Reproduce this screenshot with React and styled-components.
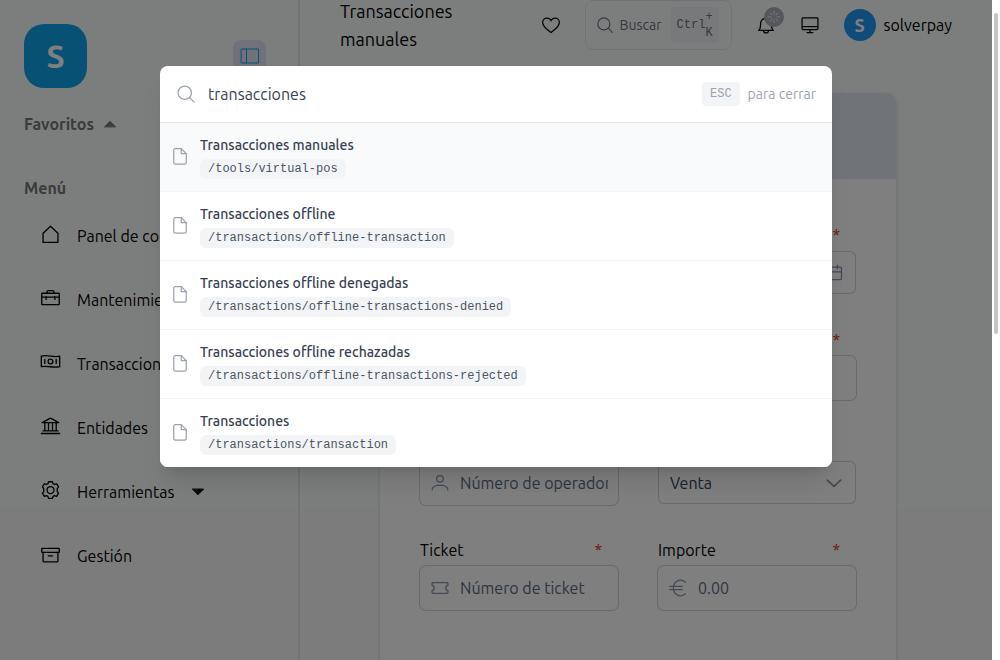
import React from "react";
import styled, { createGlobalStyle } from "styled-components";

const sans = `Ubuntu, "Noto Sans", "Open Sans", sans-serif`;
const mono = `"Liberation Mono", monospace`;

const GlobalStyle = createGlobalStyle`
  *, *::before, *::after { box-sizing: border-box; }
  body { margin: 0; font-family: ${sans}; font-size: 16px; line-height: 24px; color: #000; background: #fff; }
  button, input, select { font: inherit; color: inherit; margin: 0; }
  a { color: inherit; text-decoration: none; }
`;

const Window = styled.div`
  display: flex;
  height: 100vh;
  overflow: hidden;
`;

const Viewport = styled.div`
  position: relative;
  flex: 1;
  min-width: 0;
  display: flex;
  overflow: hidden;
  background: linear-gradient(#f9fdfb 508px, #f8f8f8 508px);
`;

const ScrollTrack = styled.div`
  flex: none;
  width: 8px;
  padding: 13px 2px 0;
  background: #fff;
`;

const ScrollThumb = styled.div`
  height: 321px;
  border-radius: 2px;
  background: #c4c4c4;
`;

const Sidebar = styled.aside`
  flex: none;
  width: 300px;
  padding: 24px;
  border-right: 2px solid #e4e6e5;
`;

const SidebarTop = styled.div`
  display: flex;
  align-items: center;
  justify-content: space-between;
  padding-right: 8px;
`;

const Logo = styled.div`
  display: grid;
  place-items: center;
  width: 63px;
  height: 64px;
  border-radius: 20px;
  background: #0ea5e9;
  color: #fff;
  font-size: 32px;
  font-weight: 700;
`;

const ToggleButton = styled.button`
  display: grid;
  place-items: center;
  width: 33px;
  height: 33px;
  padding: 0;
  border: 0;
  border-radius: 8px;
  background: #e0e4f2;
  color: #0ea5e9;
`;

const SectionTitle = styled.h2`
  display: flex;
  align-items: center;
  gap: 8px;
  margin: ${(p) => p.$top}px 0 0;
  font-size: 16px;
  font-weight: 700;
  line-height: 24px;
  color: #777;
`;

const NavList = styled.nav`
  display: flex;
  flex-direction: column;
  padding: 4px 0 0 16px;
`;

const NavItem = styled.a`
  display: flex;
  align-items: center;
  gap: 16px;
  height: 64px;
`;

const NavIcon = styled.span`
  padding-bottom: 4px;
`;

const NavLabel = styled.span`
  white-space: nowrap;
`;

const Main = styled.main`
  flex: 1;
  min-width: 0;
`;

const Header = styled.header`
  display: flex;
  align-items: center;
  height: 50px;
  padding: 0 40px;
`;

const PageTitle = styled.h1`
  flex: 1;
  margin: 0;
  padding-right: 60px;
  font-size: 18px;
  font-weight: 400;
  line-height: 28px;
`;

const IconButton = styled.button`
  position: relative;
  display: grid;
  place-items: center;
  width: 20px;
  height: 20px;
  padding: 0;
  border: 0;
  background: none;
`;

const SearchButton = styled.button`
  display: flex;
  align-items: center;
  gap: 6px;
  width: 147px;
  height: 50px;
  margin: 0 24px;
  padding: 0 12px 0 10px;
  border: 1px solid #e5e7eb;
  border-radius: 8px;
  background: none;
  color: #6b7280;
  font-size: 14px;
`;

const Shortcut = styled.kbd`
  display: flex;
  align-items: center;
  width: 48px;
  height: 36px;
  margin-left: auto;
  padding: 0 6px;
  border-radius: 4px;
  background: #f0f2f6;
  font: 12px/16px ${mono};
`;

const ShortcutKey = styled.span`
  width: 7px;
`;

const Badge = styled.span`
  position: absolute;
  top: -8px;
  right: -8px;
  display: grid;
  place-items: center;
  width: 20px;
  height: 20px;
  border-radius: 50%;
  background: #a9aebb;
  color: #fff;
`;

const Actions = styled.div`
  display: flex;
  align-items: center;
  gap: 24px;
`;

const Account = styled.a`
  display: flex;
  align-items: center;
  gap: 8px;
`;

const Avatar = styled.span`
  display: grid;
  place-items: center;
  width: 32px;
  height: 32px;
  border-radius: 50%;
  background: #2196f3;
  color: #fff;
  font-size: 18px;
  font-weight: 700;
`;

const Card = styled.section`
  margin: 43px 96px 0 80px;
  border-radius: 10px;
  overflow: hidden;
  background: #fff;
  box-shadow: 0 1px 4px rgba(0, 0, 0, 0.15);
`;

const CardHeader = styled.div`
  height: 86px;
  background: #e0e6f0;
`;

const Form = styled.form`
  display: grid;
  grid-template-columns: 1fr 1fr;
  column-gap: 40px;
  grid-auto-rows: 105px;
  padding: 44px 40px 80px;
`;

const Field = styled.div`
  display: flex;
  flex-direction: column;
  gap: 4px;
  min-width: 0;
`;

const FieldLabel = styled.label`
  display: flex;
  justify-content: space-between;
  height: 24px;
  padding-right: 16px;
`;

const Required = styled.span`
  margin-left: auto;
  color: #dc2626;
`;

const Control = styled.div`
  display: flex;
  align-items: center;
  gap: 10px;
  height: ${(p) => (p.$ring ? 44 : 43)}px;
  padding: 0 ${(p) => (p.$ring ? 10 : 12)}px;
  border-radius: 6px;
  color: #8492a8;
  box-shadow: ${(p) => (p.$ring ? "0 0 0 1px #d1d5db" : "inset 0 0 0 1px #cbd5e1")};
`;

const TextInput = styled.input`
  flex: 1;
  width: 100%;
  min-width: 0;
  padding: 0;
  border: 0;
  outline: 0;
  background: none;
  &::placeholder { color: #5b6b82; opacity: 1; }
`;

const Select = styled.select`
  flex: 1;
  padding: 0;
  border: 0;
  outline: 0;
  appearance: none;
  background: none;
  color: #334155;
`;

const Backdrop = styled.div`
  position: absolute;
  inset: 0;
  padding: 10vh 16px;
  background: rgba(0, 0, 0, 0.5);
`;

const Dialog = styled.div`
  max-width: 672px;
  margin: 0 auto;
  border-radius: 8px;
  overflow: hidden;
  background: #fff;
  box-shadow: 0 20px 25px -5px rgba(0, 0, 0, 0.1), 0 8px 10px -6px rgba(0, 0, 0, 0.1);
`;

const SearchRow = styled.div`
  display: flex;
  align-items: center;
  gap: 12px;
  height: 57px;
  padding: 0 16px;
  border-bottom: 1px solid #e5e7eb;
  color: #9ca3af;
`;

const SearchInput = styled(TextInput)`
  color: #374151;
`;

const CloseHint = styled.button`
  display: flex;
  align-items: center;
  gap: 8px;
  padding: 0;
  border: 0;
  background: none;
  color: #9ca3af;
  font-size: 14px;
`;

const EscKey = styled.kbd`
  height: 24px;
  padding: 0 8px;
  border-radius: 4px;
  background: #f3f4f6;
  font: 12px/24px ${mono};
`;

const Results = styled.ul`
  margin: 0;
  padding: 0;
  list-style: none;
`;

const ResultItem = styled.li`
  background: ${(p) => (p.$active ? "#f9fafb" : "#fff")};
  & + & { border-top: 1px solid #f3f4f6; }
`;

const ResultLink = styled.a`
  display: flex;
  align-items: center;
  gap: 10px;
  padding: 12px 10px;
  color: #9ca3af;
`;

const ResultText = styled.span`
  display: flex;
  flex-direction: column;
  align-items: flex-start;
  gap: 4px;
`;

const ResultTitle = styled.span`
  font-size: 14px;
  font-weight: 550;
  line-height: 20px;
  color: #374151;
`;

const ResultPath = styled.code`
  padding: 0 8px;
  border-radius: 6px;
  background: #f3f4f6;
  color: #4b5563;
  font: 12px/20px ${mono};
`;

const shapes = {
  panel: <><rect x="3.5" y="5" width="17" height="14" /><path d="M8.5 5v14" /></>,
  home: <path d="M3.500 10.500 12 2.500l8.500 8V21h-17z" />,
  toolbox: <><rect x="2" y="6" width="20" height="13" rx=".5" /><path d="M8 6V4.500Q8 3 9.500 3h5Q16 3 16 4.500V6M2 10.500h20M7 9.500v3.500M17 9.500v3.500" /></>,
  cash: <><path d="M1.500 4.800c7-2.200 14 2 21 0v12c-7 2.200-14-2-21 0z" /><circle cx="12" cy="10.800" r="2.700" /><path d="M5.500 8.500V13M18.500 8.500V13" /></>,
  bank: <><path d="M2.500 7.500 12 2.500l9.500 5zM1.500 20h21M3.500 17h17M5.500 7.500V17M9.700 7.500V17M14.300 7.500V17M18.500 7.500V17" /></>,
  gear: <><circle cx="12" cy="11.500" r="4" /><path d="M9.800 2h4.400l.8 2.300 1.700.8 2.300-.8 2.200 3.600-1.500 1.900v3.400l1.500 1.900-2.200 3.600-2.300-.8-1.700.8-.8 2.300H9.800L9 18.700l-1.700-.8-2.300.8-2.200-3.600 1.500-1.900V9.800L2.800 7.900 5 4.300l2.300.8L9 4.300z" /></>,
  archive: <><rect x="2" y="5" width="20" height="4.500" rx=".5" /><path d="M3.500 9.500V19q0 1.500 1.500 1.500h14q1.500 0 1.500-1.500V9.500M9.500 13.500h5" /></>,
  heart: <path d="M12 21C9 18.500 2 14.500 2 9c0-3 2.300-5.200 5-5.200 2.300 0 4.200 1.200 5 3 .8-1.800 2.700-3 5-3 2.700 0 5 2.200 5 5.200 0 5.500-7 9.500-10 12z" />,
  search: <><circle cx="10.500" cy="10.500" r="8" /><path d="m16.300 16.300 5.500 5.500" /></>,
  bell: <><path d="M3 18.500c2-1.500 2.500-4 2.500-7.500 0-4 2.500-7 6.500-7s6.500 3 6.500 7c0 3.500.5 6 2.500 7.500zM9 18.500c0 4 6 4 6 0" /></>,
  monitor: <><rect x="2.500" y="3.500" width="19" height="14" rx="1" /><path d="M2.500 14h19M12 17.500V21M8.500 21h7" /></>,
  user: <><circle cx="12" cy="7" r="4" /><path d="M2.500 20.500c0-8 19-8 19 0" /></>,
  ticket: <path d="M3.500 5.500h17q1 0 1 1v2.500c-3.500 0-3.500 6 0 6v2.500q0 1-1 1h-17q-1 0-1-1V15c3.500 0 3.500-6 0-6V6.500q0-1 1-1z" />,
  euro: <path d="M21 5C15 0 6.500 3.500 6.500 12S15 24 21 19M2 10h15M2 14h15" />,
  calendar: <><rect x="3" y="5" width="18" height="15" rx="1.500" /><path d="M3 10.500h18M8 2.500V7M16 2.500V7" /></>,
  chevron: <path d="m4 8.500 8 7.500 8-7.500" />,
  file: <><path d="M13.500 2H6.500q-2 0-2 2v14.500q0 2 2 2h11q2 0 2-2V8z" /><path d="M13.500 2v6h6" /></>,
  spinner: <path d="M12 2v5M12 17v5M2 12h5M17 12h5M5 5l3.500 3.500M15.500 15.500 19 19M5 19l3.500-3.500M15.500 8.500 19 5" />,
  up: <path d="M4 16 12 8l8 8z" fill="currentColor" />,
  down: <path d="m4 8 8 8 8-8z" fill="currentColor" />,
};

const Svg = styled.svg`
  flex: none;
  display: block;
`;

function Icon({ name, size = 20, stroke = 1.5 }) {
  return (
    <Svg width={size} height={size} viewBox="0 0 24 24" fill="none" stroke="currentColor"
      strokeWidth={stroke} strokeLinecap="round" strokeLinejoin="round" aria-hidden="true">
      {shapes[name]}
    </Svg>
  );
}

const menu = [
  ["home", "Panel de control"],
  ["toolbox", "Mantenimiento"],
  ["cash", "Transacciones"],
  ["bank", "Entidades"],
  ["gear", "Herramientas", true],
  ["archive", "Gestión"],
];

const results = [
  ["Transacciones manuales", "/tools/virtual-pos"],
  ["Transacciones offline", "/transactions/offline-transaction"],
  ["Transacciones offline denegadas", "/transactions/offline-transactions-denied"],
  ["Transacciones offline rechazadas", "/transactions/offline-transactions-rejected"],
  ["Transacciones", "/transactions/transaction"],
];

const fields = [
  { id: "entidad", name: "Entidad" },
  { id: "fecha", name: "Fecha", required: true, trailing: "calendar" },
  { id: "comercio", name: "Comercio" },
  { id: "terminal", name: "Terminal", required: true },
  { id: "operador", name: "Operador", icon: "user", placeholder: "Número de operador" },
  { id: "tipo", name: "Tipo", options: ["Venta"] },
  { id: "ticket", name: "Ticket", label: "Ticket", required: true, icon: "ticket", placeholder: "Número de ticket" },
  { id: "importe", name: "Importe", label: "Importe", required: true, icon: "euro", placeholder: "0.00" },
];

function FormField({ id, name, label, required, icon, trailing, placeholder, options }) {
  return (
    <Field>
      <FieldLabel htmlFor={id}>{label}{required && <Required>*</Required>}</FieldLabel>
      <Control $ring={!options && !trailing}>
        {icon && <Icon name={icon} />}
        {options
          ? <Select id={id} aria-label={name}>{options.map((o) => <option key={o}>{o}</option>)}</Select>
          : <TextInput id={id} aria-label={name} placeholder={placeholder} />}
        {options && <Icon name="chevron" stroke={2} />}
        {trailing && <Icon name={trailing} />}
      </Control>
    </Field>
  );
}

export default function App() {
  return (
    <Window>
      <GlobalStyle />
      <Viewport>
        <Sidebar>
          <SidebarTop>
            <Logo>S</Logo>
            <ToggleButton aria-label="Contraer menú"><Icon name="panel" size={24} stroke={1} /></ToggleButton>
          </SidebarTop>
          <SectionTitle $top={24}>Favoritos <Icon name="up" size={16} /></SectionTitle>
          <SectionTitle $top={40}>Menú</SectionTitle>
          <NavList>
            {menu.map(([icon, label, expandable]) => (
              <NavItem href="#" key={label}>
                <NavIcon><Icon name={icon} size={21} /></NavIcon>
                <NavLabel>{label}</NavLabel>
                {expandable && <Icon name="down" size={16} />}
              </NavItem>
            ))}
          </NavList>
        </Sidebar>
        <Main>
          <Header>
            <PageTitle>Transacciones manuales</PageTitle>
            <IconButton aria-label="Añadir a favoritos"><Icon name="heart" /></IconButton>
            <SearchButton>
              <Icon name="search" size={18} />
              Buscar
              <Shortcut>Ctrl <ShortcutKey>+ K</ShortcutKey></Shortcut>
            </SearchButton>
            <Actions>
              <IconButton aria-label="Notificaciones">
                <Icon name="bell" />
                <Badge><Icon name="spinner" size={14} /></Badge>
              </IconButton>
              <IconButton aria-label="Pantalla"><Icon name="monitor" /></IconButton>
              <Account href="#"><Avatar>S</Avatar>solverpay</Account>
            </Actions>
          </Header>
          <Card>
            <CardHeader />
            <Form>{fields.map((f) => <FormField key={f.id} {...f} />)}</Form>
          </Card>
        </Main>
        <Backdrop>
          <Dialog role="dialog" aria-label="Buscar">
            <SearchRow>
              <Icon name="search" />
              <SearchInput aria-label="Buscar" defaultValue="transacciones" />
              <CloseHint><EscKey>ESC</EscKey>para cerrar</CloseHint>
            </SearchRow>
            <Results>
              {results.map(([title, path], i) => (
                <ResultItem key={path} $active={i === 0}>
                  <ResultLink href={path}>
                    <Icon name="file" />
                    <ResultText>
                      <ResultTitle>{title}</ResultTitle>
                      <ResultPath>{path}</ResultPath>
                    </ResultText>
                  </ResultLink>
                </ResultItem>
              ))}
            </Results>
          </Dialog>
        </Backdrop>
      </Viewport>
      <ScrollTrack><ScrollThumb /></ScrollTrack>
    </Window>
  );
}
